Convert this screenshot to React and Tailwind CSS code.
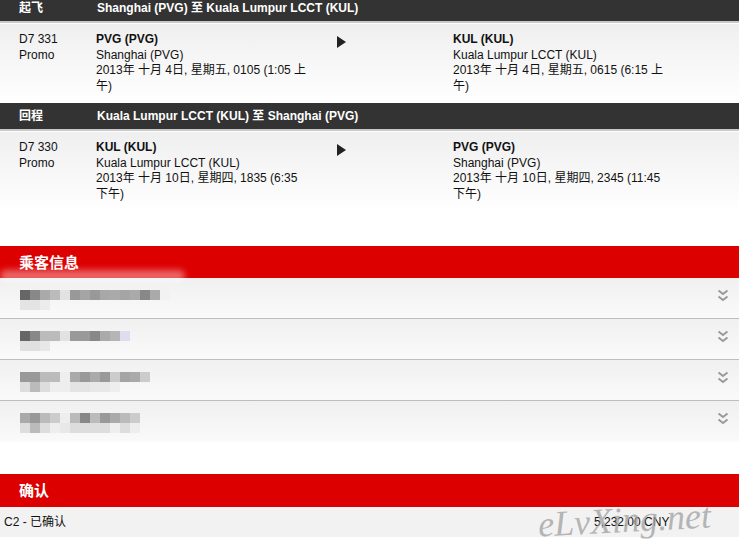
import React from 'react';

const font = { fontFamily: '"Liberation Sans", Arial, "Noto Sans CJK SC", sans-serif' };

const flights = [
  {
    label: '起飞',
    route: 'Shanghai (PVG) 至 Kuala Lumpur LCCT (KUL)',
    headerClass: 'h-[21px] leading-[17px]',
    code: 'D7 331',
    from: { code: 'PVG (PVG)', name: 'Shanghai (PVG)', l1: '2013年 十月 4日, 星期五, 0105 (1:05 上', l2: '午)' },
    to: { code: 'KUL (KUL)', name: 'Kuala Lumpur LCCT (KUL)', l1: '2013年 十月 4日, 星期五, 0615 (6:15 上', l2: '午)' },
  },
  {
    label: '回程',
    route: 'Kuala Lumpur LCCT (KUL) 至 Shanghai (PVG)',
    headerClass: 'h-[26px] leading-[27px]',
    code: 'D7 330',
    from: { code: 'KUL (KUL)', name: 'Kuala Lumpur LCCT (KUL)', l1: '2013年 十月 10日, 星期四, 1835 (6:35', l2: '下午)' },
    to: { code: 'PVG (PVG)', name: 'Shanghai (PVG)', l1: '2013年 十月 10日, 星期四, 2345 (11:45', l2: '下午)' },
  },
];

// pixelated (redacted) passenger names
const passengers = [
  {
    top: ['bg-[#666]', 'bg-[#888]', 'bg-[#aaa]', 'bg-[#bbb]', 'bg-[#e2e2e2]', 'bg-[#999]', 'bg-[#a5a5a5]', 'bg-[#999]', 'bg-[#a8a8a8]', 'bg-[#aaa]', 'bg-[#a5a5a5]', 'bg-[#aaa]', 'bg-[#888]', 'bg-[#aaa]', 'bg-[#f2f2f2]'],
    bottom: ['bg-[#e4e4e4]', 'bg-[#e4e4e4]', 'bg-[#ececec]'],
  },
  {
    top: ['bg-[#666]', 'bg-[#888]', 'bg-[#bbb]', 'bg-[#bbb]', 'bg-[#e2e2e2]', 'bg-[#999]', 'bg-[#999]', 'bg-[#888]', 'bg-[#aaa]', 'bg-[#b5b5b5]', 'bg-[#dde]'],
    bottom: ['bg-[#e0e0e0]', 'bg-[#e0e0e0]', 'bg-[#e8e8e8]'],
  },
  {
    top: ['bg-[#999]', 'bg-[#999]', 'bg-[#bbb]', 'bg-[#bbb]', 'bg-[#eee]', 'bg-[#aaa]', 'bg-[#999]', 'bg-[#aaa]', 'bg-[#999]', 'bg-[#ccc]', 'bg-[#a5a5a5]', 'bg-[#aaa]', 'bg-[#ccc]'],
    bottom: ['bg-[#ddd]', 'bg-[#bbb]', 'bg-[#ddd]', 'bg-[#eee]', 'bg-[#eee]', 'bg-[#e4e4e4]', 'bg-[#e4e4e4]', 'bg-[#e8e8e8]', 'bg-[#e8e8e8]', 'bg-[#eee]'],
  },
  {
    top: ['bg-[#aaa]', 'bg-[#999]', 'bg-[#bbb]', 'bg-[#ccc]', 'bg-[#eee]', 'bg-[#bbb]', 'bg-[#888]', 'bg-[#bbb]', 'bg-[#999]', 'bg-[#aaa]', 'bg-[#bbb]', 'bg-[#ccc]'],
    bottom: ['bg-[#ddd]', 'bg-[#bbb]', 'bg-[#ddd]', 'bg-[#eee]', 'bg-[#e8e8e8]', 'bg-[#ddd]', 'bg-[#ddd]', 'bg-[#ddd]', 'bg-[#ddd]', 'bg-[#eee]', 'bg-[#ddd]', 'bg-[#eee]'],
  },
];

function Chevrons() {
  return (
    <svg width="12" height="14" viewBox="0 0 12 14" fill="none" stroke="#9a9a9a" strokeWidth="2">
      <path d="M1.5 1.5 L6 5 L10.5 1.5" />
      <path d="M1.5 7.5 L6 11 L10.5 7.5" />
    </svg>
  );
}

function Place({ p }) {
  return (
    <div className="whitespace-nowrap">
      <div className="font-bold">{p.code}</div>
      <div>{p.name}</div>
      <div>{p.l1}</div>
      <div>{p.l2}</div>
    </div>
  );
}

function Flight({ f }) {
  return (
    <section>
      <div className={`flex bg-[#333333] text-white font-bold text-[12px] ${f.headerClass}`}>
        <div className="w-[97px] pl-[19px]">{f.label}</div>
        <div>{f.route}</div>
      </div>
      <div className="h-[2px] bg-[#c8c8c8]" />
      <div className="h-[80px] pt-[8px] flex text-[12px] leading-[15.5px] text-[#111] bg-gradient-to-b from-[#efefef] to-white border-t border-white">
        <div className="w-[96px] pl-[19px]">
          <div>{f.code}</div>
          <div>Promo</div>
        </div>
        <div className="w-[241px]">
          <Place p={f.from} />
        </div>
        <div className="w-[116px] pt-[4px]">
          <svg width="9" height="12" viewBox="0 0 9 12">
            <polygon points="0,0 9,6 0,12" fill="#222" />
          </svg>
        </div>
        <Place p={f.to} />
      </div>
    </section>
  );
}

export default function App() {
  return (
    <div className="relative w-[743px] h-[549px] bg-white overflow-hidden" style={font}>
      <div className="w-[739px]">
        <Flight f={flights[0]} />
        <Flight f={flights[1]} />

        <div className="mt-[35px] h-[32px] bg-[#dd0000] text-white font-bold text-[15px] leading-[34px] pl-[19px]">乘客信息</div>
        <div>
          {passengers.map((p, i) => (
            <div
              key={i}
              className={`h-[41px] flex items-start justify-between pl-[20px] pr-[10px] bg-gradient-to-b from-[#f0f0f0] to-[#fafafa] ${i < 3 ? 'border-b border-[#bdbdbd]' : ''}`}
            >
              <div className="pt-[12px]">
                <div className="flex">
                  {p.top.map((c, j) => (
                    <div key={j} className={`w-[10px] h-[10px] ${c}`} />
                  ))}
                </div>
                <div className="flex">
                  {p.bottom.map((c, j) => (
                    <div key={j} className={`w-[10px] h-[10px] ${c}`} />
                  ))}
                </div>
              </div>
              <div className="pt-[11px]">
                <Chevrons />
              </div>
            </div>
          ))}
        </div>

        <div className="mt-[32px] h-[33px] bg-[#dd0000] text-white font-bold text-[15px] leading-[34px] pl-[19px]">确认</div>
        <div className="h-[30px] flex items-center text-[12px] text-[#111] bg-[#f2f2f2]">
          <div className="w-[594px] pl-[4px]">C2 - 已确认</div>
          <div>5,232.00 CNY</div>
        </div>
      </div>

      {/* blur smudge left over the passenger heading */}
      <div className="absolute left-[0px] top-[270px] w-[185px] h-[12px] rounded-full bg-white/40 blur-[3px]" />

      {/* watermark */}
      <div
        className="absolute left-[538px] top-[502px] text-[#a0a0a0]/75 italic text-[36px] leading-none -rotate-3"
        style={{ fontFamily: '"Liberation Serif", serif' }}
      >
        eLvXing.net
      </div>
    </div>
  );
}
